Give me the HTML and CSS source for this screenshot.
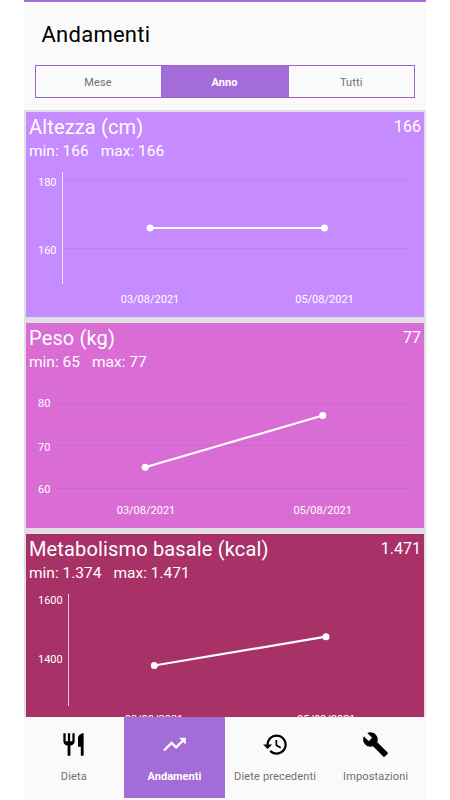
FILE: index.html
```html
<!DOCTYPE html>
<html lang="it">
<head>
<meta charset="utf-8">
<title>Andamenti</title>
<link rel="stylesheet" href="styles.css">
</head>
<body>
<div class="app">
  <header class="header">
    <h1 class="title">Andamenti</h1>
    <div class="tabs">
      <div class="tab">Mese</div>
      <div class="tab active">Anno</div>
      <div class="tab">Tutti</div>
    </div>
  </header>
  <main class="cards">
    <section class="card height">
      <div class="card-head"><h2>Altezza (cm)</h2><span class="current">166</span></div>
      <div class="range"><span>min: 166</span><span>max: 166</span></div>
      <svg class="chart" viewBox="26 164 398 153">
        <path class="grid" d="M63 180.500H411M63 248.500H411"/>
        <path class="axis" d="M62.500 172V284"/>
        <path class="line" d="M150 228H324.500"/>
        <circle cx="150" cy="228" r="3.500"/><circle cx="324.500" cy="228" r="3.500"/>
        <text x="38" y="186">180</text><text x="38" y="253.500">160</text>
        <text class="date" x="150" y="303">03/08/2021</text><text class="date" x="324.500" y="303">05/08/2021</text>
      </svg>
    </section>
    <section class="card weight">
      <div class="card-head"><h2>Peso (kg)</h2><span class="current">77</span></div>
      <div class="range"><span>min: 65</span><span>max: 77</span></div>
      <svg class="chart" viewBox="26 375 398 153">
        <path class="grid" d="M56 403.500H411M56 445.500H411M56 488.500H411"/>
        <path class="line" d="M145.200 467.300L322.700 415.500"/>
        <circle cx="145.200" cy="467.300" r="3.500"/><circle cx="322.700" cy="415.500" r="3.500"/>
        <text x="38" y="407">80</text><text x="38" y="451">70</text><text x="38" y="493">60</text>
        <text class="date" x="146" y="514">03/08/2021</text><text class="date" x="322.700" y="514">05/08/2021</text>
      </svg>
    </section>
    <section class="card metabolism">
      <div class="card-head"><h2>Metabolismo basale (kcal)</h2><span class="current">1.471</span></div>
      <div class="range"><span>min: 1.374</span><span>max: 1.471</span></div>
      <svg class="chart" viewBox="26 586 398 153">
        <path class="grid" d="M69 598.500H408M69 657.500H408"/>
        <path class="axis" d="M68.500 594V706"/>
        <path class="line" d="M154.300 665.500L326 636.700"/>
        <circle cx="154.300" cy="665.500" r="3.500"/><circle cx="326" cy="636.700" r="3.500"/>
        <text x="38" y="604">1600</text><text x="38" y="663">1400</text>
        <text class="date" x="154" y="723">03/08/2021</text><text class="date" x="326.300" y="723">05/08/2021</text>
      </svg>
    </section>
  </main>
  <nav class="nav">
    <a class="item">
      <svg class="icon" viewBox="0 0 24 24"><path d="M11 9H9V2H7v7H5V2H3v7c0 2.120 1.660 3.840 3.750 3.970V22h2.500v-9.030C11.340 12.840 13 11.120 13 9V2h-2v7zm5-3v8h2.500v8H21V2c-2.760 0-5 2.240-5 4z"/></svg>
      <span>Dieta</span>
    </a>
    <a class="item active">
      <svg class="icon" viewBox="0 0 24 24"><path d="M16 6l2.290 2.290-4.880 4.880-4-4L2 16.590 3.410 18l6-6 4 4 6.300-6.290L22 12V6z"/></svg>
      <span>Andamenti</span>
    </a>
    <a class="item">
      <svg class="icon" viewBox="0 0 24 24"><path d="M13 3c-4.970 0-9 4.030-9 9H1l3.890 3.890.070.140L9 12H6c0-3.870 3.130-7 7-7s7 3.130 7 7-3.130 7-7 7c-1.930 0-3.680-.790-4.940-2.060l-1.420 1.420C8.270 19.990 10.510 21 13 21c4.970 0 9-4.030 9-9s-4.030-9-9-9zm-1 5v5l4.280 2.540.720-1.210-3.500-2.080V8H12z"/></svg>
      <span>Diete precedenti</span>
    </a>
    <a class="item">
      <svg class="icon" viewBox="0 0 24 24"><path d="M22.700 19l-9.100-9.100c.9-2.300.4-5-1.500-6.900-2-2-5-2.400-7.400-1.300L9 6 6 9 1.600 4.700C.4 7.100.9 10.100 2.900 12.100c1.900 1.900 4.600 2.400 6.900 1.500l9.100 9.100c.4.4 1 .4 1.400 0l2.300-2.300c.5-.4.5-1.100.1-1.400z"/></svg>
      <span>Impostazioni</span>
    </a>
  </nav>
</div>
</body>
</html>
```
FILE: styles.css
```css
* { box-sizing: border-box; }
body {
  margin: 0;
  background: #fff;
  font-family: Roboto, "Liberation Sans", sans-serif;
  overflow: hidden;
}
.app {
  width: 402.5px;
  height: 800px;
  margin-left: 23.5px;
  display: flex;
  flex-direction: column;
  background: #fafafa;
  border-top: 2px solid #a36cd6;
}
.header {
  height: 108px;
  padding: 18px 11px 0;
  flex: none;
}
.title {
  margin: 0 0 15px 7px;
  font-size: 22px;
  font-weight: 400;
  line-height: 30px;
  letter-spacing: .25px;
  color: #000;
}
.tabs {
  display: grid;
  grid-template-columns: 125px 128px 1fr;
  height: 33px;
  border: 1px solid #9c64c2;
  width: 380.5px;
}
.tab {
  font-size: 11px;
  line-height: 33px;
  text-align: center;
  letter-spacing: .15px;
  color: #707070;
}
.tab.active { height: 31px; background: #a36cd6; color: #fff; font-weight: 700; letter-spacing: 0; }
.cards {
  height: 607px;
  flex: none;
  padding: 2px 2px 0 2.5px;
  background: #e1dfe1;
  overflow: hidden;
}
.card {
  height: 205px;
  margin-bottom: 6px;
  color: #fff;
}
.height { background: #c58bff; }
.weight { background: #d96dd5; }
.metabolism { background: #a83267; }
.card-head {
  display: flex;
  justify-content: space-between;
  height: 29px;
  padding: 0 3px;
}
h2 {
  margin: 0;
  font-size: 20px;
  font-weight: 400;
  line-height: 30px;
  letter-spacing: .15px;
}
.current { font-size: 16px; line-height: 29px; }
.range {
  display: flex;
  gap: 12px;
  height: 23px;
  padding-left: 3px;
  font-size: 15.5px;
  line-height: 21px;
}
.chart { display: block; width: 398px; height: 153px; fill: #fff; font-size: 11px; }
.grid { fill: none; stroke: #000; stroke-opacity: .06; }
.axis { fill: none; stroke: #fff; stroke-opacity: .75; }
.line { fill: none; stroke: #fff; stroke-width: 2.2; }
.date { text-anchor: middle; }
.nav {
  display: grid;
  grid-template-columns: repeat(4, 1fr);
  height: 80.5px;
  flex: none;
}
.item {
  display: flex;
  flex-direction: column;
  align-items: center;
  padding-top: 14px;
  font-size: 11px;
  letter-spacing: .15px;
  line-height: 14px;
  color: #707070;
  white-space: nowrap;
}
.item.active { background: #a36cd6; color: #fff; font-weight: 700; letter-spacing: 0; }
.icon { width: 27px; height: 27px; margin-bottom: 12px; fill: #000; }
.active .icon { fill: #fff; }
```
